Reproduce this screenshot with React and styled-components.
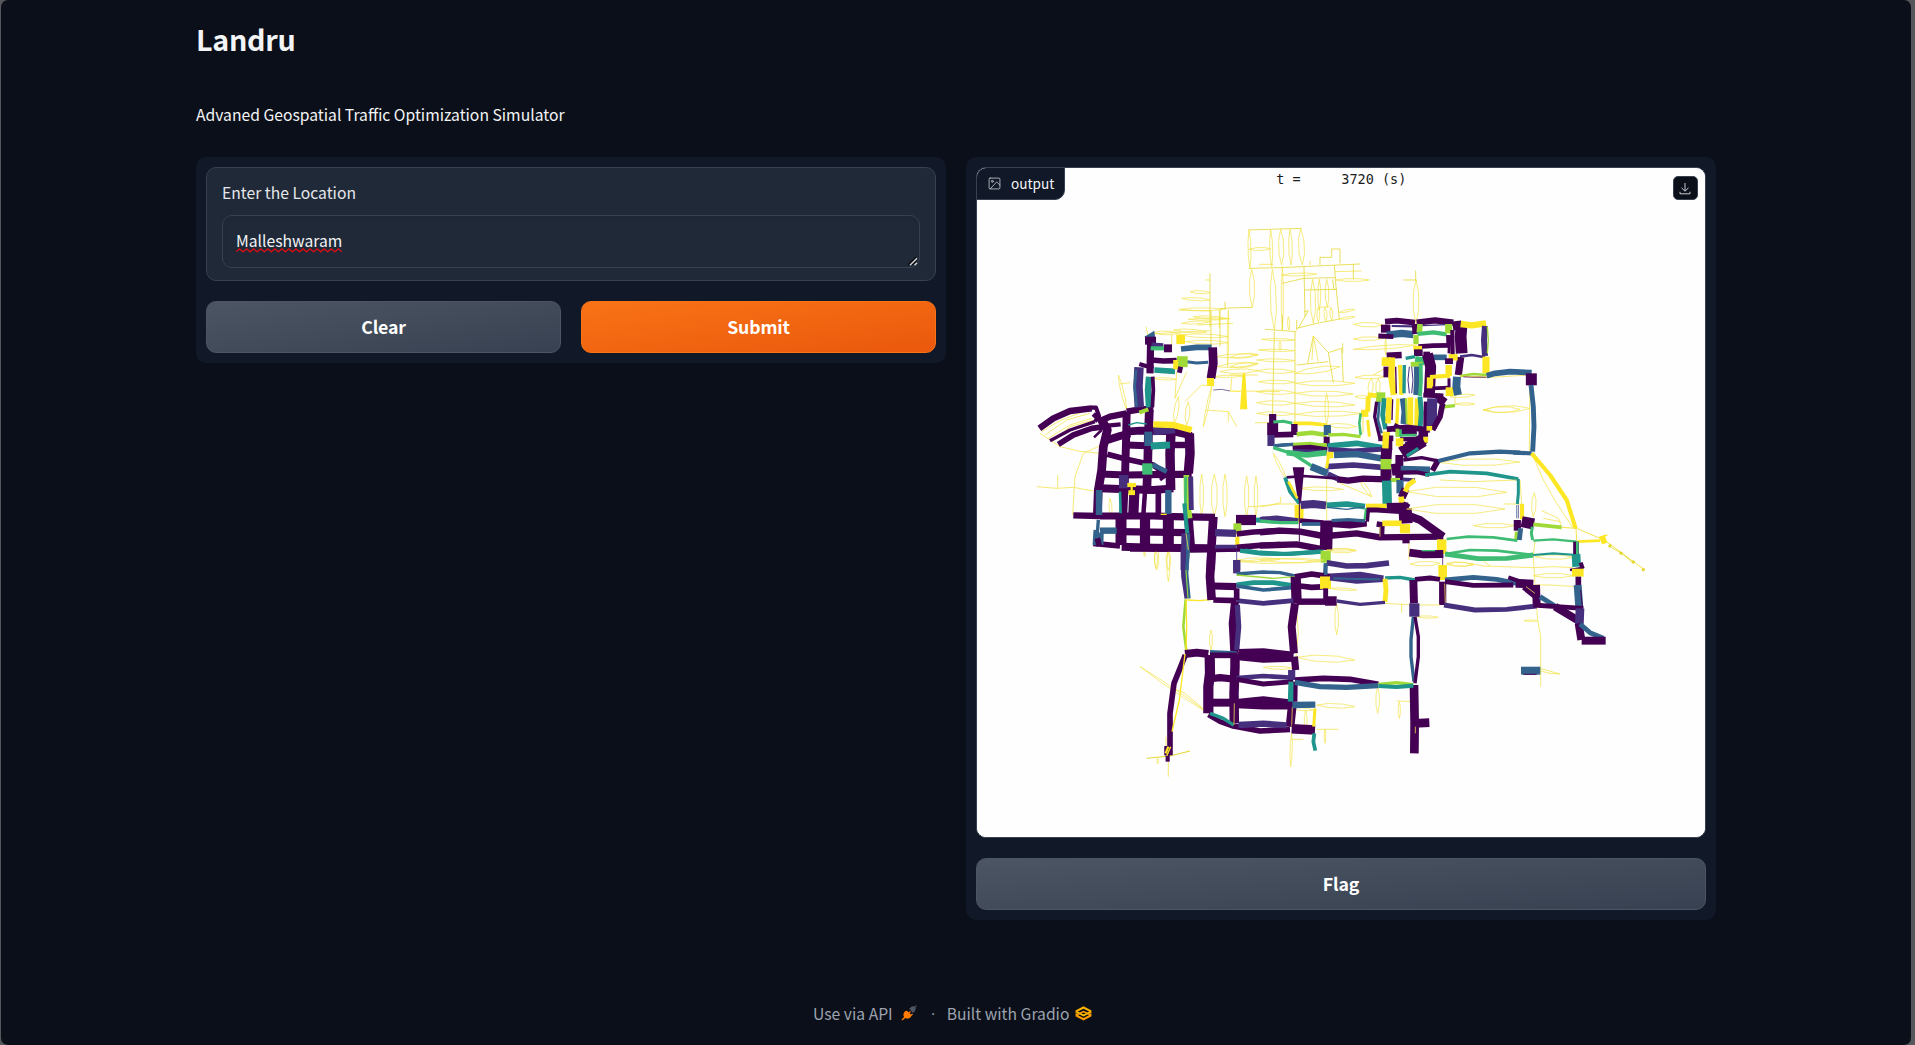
import React from 'react';
import styled, { createGlobalStyle } from 'styled-components';

const GlobalStyle = createGlobalStyle`
  * { box-sizing: border-box; }
  body {
    margin: 0;
    background: #55575b;
    font-family: "Noto Sans CJK SC", "Noto Sans CJK JP", "Open Sans", sans-serif;
    color: #f3f4f6;
  }
`;

const Frame = styled.div`
  height: 1045px;
  margin: 0 4px 0 1px;
  background: #0b0f19;
  border-radius: 7px;
  overflow: hidden;
`;

const Page = styled.main`
  width: 1520px;
  height: 1045px;
  margin-left: 195px;
  display: flex;
  flex-direction: column;
`;

const Title = styled.h1`
  margin: 16px 0 0;
  height: 46px;
  line-height: 46px;
  font-size: 28.7px;
  letter-spacing: -0.3px;
  font-weight: 700;
`;

const Description = styled.p`
  margin: 40px 0 0;
  height: 26px;
  line-height: 26px;
  font-size: 15.7px;
  white-space: nowrap;
`;

const Columns = styled.div`
  margin-top: 29px;
  display: flex;
  align-items: flex-start;
  gap: 20px;
`;

const Panel = styled.section`
  width: 750px;
  padding: 10px;
  border-radius: 10px;
  background: #111827;
  display: flex;
  flex-direction: column;
  gap: 20px;
`;

const Field = styled.label`
  height: 114px;
  padding: 14px 15px 12px;
  border: 1px solid #374151;
  border-radius: 10px;
  background: #1f2937;
  display: flex;
  flex-direction: column;
`;

const FieldName = styled.span`
  height: 22px;
  line-height: 22px;
  margin-bottom: 11px;
  font-size: 15.7px;
  color: #e5e7eb;
`;

const TextBox = styled.div`
  position: relative;
  height: 53px;
  padding: 1px 13px 0;
  border: 1px solid #374151;
  border-radius: 10px;
  box-shadow: inset 0 2px 4px rgba(0, 0, 0, 0.06);
  line-height: 48px;
  font-size: 15.7px;
`;

const Misspelt = styled.span`
  position: relative;
  display: inline-block;
`;

const Squiggle = styled.svg`
  position: absolute;
  left: 0;
  top: 31px;
`;

const ResizeGrip = styled.svg`
  position: absolute;
  right: 1px;
  bottom: 1px;
`;

const ButtonRow = styled.div`
  display: flex;
  gap: 20px;
`;

const Button = styled.button`
  flex: 1;
  height: 52px;
  padding: 0;
  border: 1px solid ${(p) => (p.$primary ? '#f97316' : '#4b5563')};
  border-radius: 10px;
  background: ${(p) =>
    p.$primary
      ? 'linear-gradient(to bottom right, #f97316, #ea580c)'
      : 'linear-gradient(to bottom right, #4b5563, #374151)'};
  color: #fff;
  font-family: inherit;
  font-size: 17.7px;
  letter-spacing: -0.15px;
  font-weight: 700;
  line-height: 46px;
  padding-bottom: 2px;
`;

const ImageBlock = styled.div`
  position: relative;
  height: 671px;
  border: 1px solid #374151;
  border-radius: 10px;
  background: #fff;
  overflow: hidden;
`;

const Badge = styled.div`
  position: absolute;
  top: -1px;
  left: -1px;
  width: 89px;
  height: 33px;
  padding: 0 0 1px 11px;
  display: flex;
  align-items: center;
  gap: 10px;
  border: 1px solid #374151;
  border-radius: 10px 0 10px 0;
  background: #111827;
  color: #f3f4f6;
  font-size: 13.6px;
  line-height: 28px;
`;

const Download = styled.button`
  position: absolute;
  top: 8px;
  right: 7px;
  width: 25px;
  height: 24px;
  padding: 0 1px 0 0;
  display: grid;
  place-items: center;
  border: 1px solid #374151;
  border-radius: 5px;
  background: #0b0f19;
  color: #c5c9d0;
`;

const Footer = styled.footer`
  margin-top: 82px;
  height: 24px;
  display: flex;
  align-items: center;
  padding-left: 617px;
  color: #9ca3af;
  font-size: 15.7px;
  line-height: 24px;
  white-space: nowrap;
  svg { display: block; position: relative; top: -1px; }
`;

const Dot = styled.span`
  width: 30px;
  padding-left: 3px;
  text-align: center;
  font-family: "Liberation Sans", sans-serif;
`;

const FooterItem = styled.span`
  display: flex;
  align-items: center;
  gap: ${(p) => p.$gap}px;
`;

const Clock = styled.text`
  font-family: "DejaVu Sans Mono", monospace;
  font-size: 13.5px;
  fill: #1c1c1c;
  white-space: pre;
`;

const COLORS = {
  P: '#440154', V: '#46307e', B: '#33638d', T: '#1f958b',
  G: '#3fbc73', L: '#a0da39', Y: '#fde725', y: '#f3e34a', D: '#e3d62a',
};

/* Each street: colour letter + width, then points. "y@n" is a pair of thin
   lanes bowed apart by n. "#" fills the outline. */
const TILES = [
  { x: 1020, y: 310, roads: `
y2 75,375 140,330 210,310
y2 85,385 150,345 215,325
y2 65,365 120,332 200,300
y2 60,370 120,410 180,424 240,430
y2 100,392 150,350 220,330
y2 50,530 110,535 160,532 230,545 380,535
y2 113,495 113,535
y2 245,405 190,430 165,500 158,615
y@5 545,492 545,620
y@8 583,492 583,620
y@6 615,492 615,620
y@6 680,498 680,620
y@5 708,498 708,620
y2 685,590 740,588 780,578
y2 400,72 480,66 570,62
y@5 400,68 475,70
y@5 480,75 625,80
y@5 495,95 625,98
D2 573,0 573,110
y2 598,0 598,55
y@2 625,0 623,170
y2 475,0 570,3
y@3 505,28 630,26
y2 530,45 640,40
y@5 585,140 715,135
y@6 590,170 715,160
y@6 600,185 715,182
y@3 580,200 670,198
y2 635,205 632,240
y2 495,275 545,225 580,228
y@3 575,230 550,350
y2 555,300 625,305 650,350
y2 625,305 625,335
y2 470,185 465,265 500,185
y@6 475,260 463,340
y@6 505,275 500,345
y@4 295,195 320,300
y2 300,222 330,218
y@4 270,565 273,620
y@3 400,205 470,208
y2 455,70 455,108
y2 378,50 385,80
y@6 410,710 410,780
y@6 445,720 445,780
y2 372,720 372,738
y@5 650,750 780,748
y2 480,60 480,80
V2.1 580,240 605,238 630,243
Y3 630,243 660,244
y2 660,243 780,245
Y# 668,190 676,190 682,298 660,298
P16 58,355 100,325 150,303 215,295
P10 213,293 228,293 237,318 225,335
P12 220,312 245,335
P8 90,392 150,360 225,335
P14 115,403 160,375 215,355 255,350
P10 245,352 270,346 302,343
P6 222,382 245,360
P16 235,335 270,320 320,310
P16 320,305 360,298 400,296
P22 245,330 262,360 250,410 245,480 235,540 232,615
P20 320,305 318,400 315,500 310,610
P22 388,300 385,380 383,470 380,550
P20 255,392 300,378 330,370
P20 320,365 360,362 460,362
P18 310,405 320,405 400,408
P14 262,433 320,448 400,465 440,495
P18 240,492 320,495 440,493 515,493
P20 238,535 300,537 400,540 460,535
P18 400,362 460,365 515,377
P24 453,365 450,430 452,540
P24 508,370 510,430 505,490
P16 460,405 510,405
P16 160,616 240,618
P18 240,618 400,618 460,620 585,622
P28 303,620 303,705
P26 375,620 375,710
P28 445,620 445,712
P22 505,620 512,710
P22 580,620 575,700 572,780
P18 300,665 500,668
P20 305,710 400,713 575,715
P14 220,700 300,708
P26 343,545 340,615
P11 375,545 370,615
P14 415,545 415,615
B16 237,540 237,615
B16 445,540 445,612
T6 300,545 302,610
B8 235,630 232,670
B16 240,662 290,662
B17 241,668 240,705
B12 228,660 225,705
P14 232,685 238,708
B20 385,365 385,408
T18 392,408 450,405
P14 383,408 383,500
V20 400,364 465,358
Y16 400,343 460,345 515,360
B12 398,464 440,485
P8 420,510 445,492
V24 311,495 311,535
Y10 322,525 348,525
Y12 325,548 345,548
Y5 335,525 335,550
Y4 422,613 440,613
T4 325,345 350,338 380,342
L10 358,308 385,298
G26 382,460 382,494
V24 357,172 354,230 358,292
B6 348,180 344,230 350,290
T16 387,200 384,240 387,292
P9 398,200 400,240 397,292
B# 373,80 403,62 406,90
P20 375,92 408,92
P18 392,85 390,190
P10 358,162 400,175
P14 395,150 430,153 470,152
T14 403,180 465,184
V10 395,104 430,106
G10 392,115 432,115
P20 432,115 456,115
B14 483,117 530,112 575,112
P22 578,112 580,160 573,205
B7 500,155 530,159 565,157
Y20 561,216 582,216
Y24 469,88 495,88
L28 471,155 503,155
Y12 467,150 467,178
P12 482,170 478,188
L14 499,495 500,560 509,625
G6 497,500 496,600
V12 512,500 514,600
T10 493,580 502,670
V14 493,670 490,780
B9 505,670 500,780
y2 498,670 508,740
P26 648,630 708,630
T12 708,630 780,634
V10 725,626 780,626
L20 652,640 652,672
Y10 652,680 652,706
V18 585,668 648,670
P14 650,672 700,666 780,662
V18 585,715 650,715
P14 650,712 720,706 780,704
T10 660,722 720,730 780,732
V18 650,750 650,780` },
  { x: 1230, y: 220, roads: `
D2 55,30 215,25
y@4 57,30 60,145
y@4 122,30 125,140
y@7 152,28 155,135
y@5 180,28 183,135
y@8 212,26 217,135
y@4 57,88 122,86
D2 57,145 150,143 390,132
y2 88,133 130,133
y@7 65,148 67,262
D2 -30,266 0,264 67,262
y@8 127,148 133,330
y@3 157,140 157,330
D2 222,140 225,290
y@7 248,178 250,310
y@4 268,178 268,270
y@5 290,178 292,262
y2 240,122 240,135
D2 270,135 270,112 305,112 305,87 330,87 330,130
D2 313,135 318,200 328,297
D2 308,178 312,210
y@4 155,165 260,162
D2 157,190 222,175 315,173
D2 225,210 320,208
D2 370,132 370,178
y2 315,155 395,153
y@4 318,180 418,180
y@4 265,262 265,305
y@4 285,262 288,303
y@4 303,262 305,300
y2 265,262 300,260
y@3 328,277 375,268
D2 200,325 260,310 330,297
y@3 330,297 375,290
D2 105,328 200,335
D2 133,335 127,605
D2 195,335 195,610
y@3 95,358 195,360
y@3 85,390 195,392
y@3 150,365 150,390
y@4 80,420 195,422
y@6 80,452 195,455
y@5 85,485 195,487
y@6 80,515 195,518
y@6 80,548 195,550
y@5 80,580 195,582
y2 75,608 120,608
y@8 195,460 330,440
y@7 195,490 375,490
y@7 195,520 370,522
y@7 195,550 375,555
y@7 195,583 395,580
y@6 290,615 380,620
D2 200,435 295,425
D2 233,430 250,348 295,398 335,385 340,485
y2 250,348 246,420
y2 250,348 265,425
D2 295,398 310,488
D2 338,370 338,400
y@5 290,520 290,615
D2 157,285 157,330
y@3 175,290 177,330
D2 200,300 200,330
D2 222,275 235,272 205,325
y@6 370,313 460,315
y@5 370,357 460,355
y@5 370,388 560,375
D2 520,180 560,180
D2 557,152 557,180
y@8 558,180 558,310
y@2 467,355 467,405
y@6 0,412 83,403
y@6 0,440 83,432
y2 0,465 83,465
y@5 375,472 465,470
y2 430,465 465,445
y@7 424,475 420,525
y@6 445,475 443,525
y@4 375,530 420,532
y@4 660,530 735,525
y@3 675,552 735,552
y2 760,570 780,572
y2 675,530 675,555
P14 465,305 500,302 555,308
P16 560,308 615,301 670,308
P24 467,314 467,338
B18 470,345 515,340 550,344
P12 445,348 490,350
V5 485,318 550,319
P16 555,312 557,342
L14 570,312 568,338
V4 578,317 650,314
G10 562,342 610,337 650,343
L18 656,312 656,340
P22 680,303 683,330
P12 565,380 610,377 660,376
P18 659,345 660,375
P10 667,330 668,405
P7 658,375 657,400
P30 695,310 692,350 695,400
Y16 692,312 725,316 768,310
V15 765,318 762,360 765,408
L4 772,320 775,360 772,400
V6 690,410 725,405 765,412
P18 692,412 685,465
Y18 768,410 768,460
L6 690,468 730,462 770,465
P4 700,470 770,472
L13 558,345 558,372
Y12 550,385 576,385
P22 565,388 565,408
P16 470,407 515,405
T8 527,415 555,410
P8 580,400 600,400
G20 555,420 584,424
L12 542,433 577,433
B14 603,412 650,412
Y16 656,412 683,412
P20 657,415 657,432
P28 592,402 602,440 598,525
Y22 468,412 468,438
P16 470,440 470,472
Y16 486,412 484,470 492,525
P4 497,440 499,520
Y10 510,435 514,525
T8 523,435 522,520
V3 538,440 534,480 538,520
V3 545,440 549,480 545,520
B14 560,440 561,480 558,525
G9 572,430 573,480 570,528
Y10 600,471 660,467
Y16 656,435 656,468
Y16 600,472 600,505
P9 607,505 655,503
P7 657,475 657,505
Y20 659,502 659,528
B20 681,470 679,500 684,525
P12 580,525 640,528
P22 620,530 645,548
L8 635,561 675,557
L24 452,517 452,546
Y12 413,525 440,527
Y12 415,530 413,575
Y18 393,580 415,580
G6 392,580 388,610 392,645
Y7 413,600 418,650
y3 399,590 399,640
P8 440,545 434,590 450,655
B6 448,545 444,600 455,640
T12 463,535 458,585 467,628
Y14 478,532 474,610
P4 488,538 486,600
Y8 504,535 500,620
B14 518,535 523,575 520,612
L5 528,535 531,612
Y14 541,532 541,615
Y12 562,535 560,620
T12 570,530 574,580 570,625
P14 590,545 588,630
V26 607,535 606,560 605,625
P14 638,550 630,590 608,630
P14 470,628 530,622 600,630
P20 490,620 520,635 560,632
G14 507,628 507,650
G6 510,646 560,645
P24 580,622 580,660 530,680
P10 510,658 590,655
Y18 470,635 467,655
Y14 512,655 512,680
P14 445,655 490,655
Y12 587,650 587,668
Y14 598,618 598,632
P20 475,660 475,690
P18 128,582 128,610
P28 128,608 128,645
P14 115,645 190,643
V18 123,645 123,678
G7 130,606 160,604 187,610
Y9 190,610 240,610 290,615
P16 193,612 193,645
L11 200,643 245,638 290,645
B18 292,615 292,645
P15 290,650 290,680
L8 295,645 340,643 392,650
L9 190,674 240,671 290,678
B7 135,677 190,673` },
  { x: 1260, y: 400, roads: `
y@5 120,265 250,268
y@5 300,240 335,290
y2 240,250 335,290
y@4 40,160 78,235
y2 62,290 62,310
y2 0,318 60,312 120,312
y2 200,215 200,360
y@6 200,452 290,452
y@8 670,30 780,28
y@5 0,480 180,485
y@6 450,492 540,490
y@6 560,490 640,495
y2 447,425 447,480
y@9 535,187 780,186
B8 40,138 70,135 100,133
L9 100,135 200,135
P14 98,146 150,143 202,150
V8 100,152 200,155
G14 80,158 140,165 200,158
G8 40,143 100,162 158,200
B18 153,200 203,220
V14 203,222 235,237
P16 232,238 265,242 310,236 380,238
T14 203,138 290,130 378,145
V12 205,148 280,153 375,147
B16 222,165 290,162 380,178
V14 200,200 280,195 375,203
P28 380,145 378,178
P28 378,205 378,245
Y16 200,165 220,165
Y7 205,170 200,205
L28 378,177 378,208
P30 395,210 430,205
P20 418,165 418,240
P34 425,160 490,120
L9 412,86 412,110
T8 440,168 475,145
Y16 378,100 376,145
Y18 418,115 418,138
P8 430,180 485,173 535,183
P14 535,180 517,212
B18 422,208 510,210
P10 420,218 470,217 508,224
T9 495,225 570,215 680,220 775,237
B10 535,183 630,160 720,155 780,158
L10 392,240 420,240
V9 428,238 465,240
B18 420,240 420,280
P24 420,275 442,285
Y12 465,240 445,255 435,275
Y14 423,290 427,320
T24 380,242 382,320
P18 380,320 445,318
Y15 318,320 380,320
G8 320,325 315,360
P12 320,330 350,330 420,335
P8 325,330 322,365
P34 435,325 438,370
P20 440,345 480,360 550,410
P10 430,310 448,320
P# 98,202 133,202 123,310 115,310
P6 80,232 130,228 230,235
T9 75,232 90,275 118,310
Y6 85,245 112,295
Y14 112,315 113,368
Y8 126,315 125,365
V20 122,315 160,312 198,316
T14 200,316 260,312 315,320
B4 200,322 260,328 315,320
P3 118,300 118,425
V12 0,358 50,354 115,362
G8 0,363 60,368 115,368
P12 120,362 190,368 320,370
P12 210,374 270,378 320,372
B9 125,372 190,372
B8 215,362 265,359 315,363
P32 200,365 198,450
P16 0,397 60,392 120,395 190,408
P16 200,408 290,400 360,412 550,410
P16 0,437 110,433 190,448
P14 350,372 370,375
P12 367,370 365,415
y2 360,380 360,410
Y14 367,370 425,370
Y26 435,372 435,400
P18 438,402 438,430
T10 0,458 70,462 190,455
L26 197,452 197,488
B10 197,490 195,530
V14 200,488 260,498 320,497 387,489
Y24 545,418 545,462
P20 448,458 490,463 550,462
G4 485,452 525,452
P2.1 548,462 548,495` },
  { x: 1440, y: 300, roads: `
y2 60,228 150,232 270,225
y2 270,230 268,455
y@9 130,330 270,325
y2 280,470 310,540 350,610 400,685
y2 240,540 245,610
y2 0,540 100,545 230,540
y@14 -100,575 200,577
y@13 -100,627 195,627
y2 190,612 250,612
y@6 100,677 225,677
y@6 283,578 280,650
y2 305,632 355,655 365,680
y2 310,655 362,665
y2 90,790 130,798 280,803
y@5 20,793 100,793
y2 115,770 150,798
y@6 285,770 400,772
y2 280,803 340,800 400,803
y@6 280,827 400,827
y2 240,855 330,855 410,860
y2 285,720 280,770 285,850
y2 290,920 293,960 302,1010 302,1160
y@2 252,962 292,962
y2 300,1105 360,1122
y2 300,1112 330,1120 360,1122
B14 140,227 165,220 210,215 275,218
P28 274,220 274,256
B12 273,255 280,320 282,380 278,455
B10 220,458 275,460
Y10 275,460 330,525 380,600 407,685
T7 235,537 235,580 232,612
Y10 246,612 246,658
B2 230,615 230,655
V2 235,615 235,655
P18 232,660 232,692
P28 245,665 282,672
L12 232,695 230,720
B12 242,685 238,720
G7 277,680 274,700 278,720
L9 280,673 365,682
y3 365,682 410,685 480,715
y3 408,685 410,720
Y20 482,722 498,716
Y4 478,712 502,705
Y6 412,725 480,722
y3 500,725 540,755 580,785 612,808
D2 505,738 545,760 580,790
D7 507,735 513,740
D7 540,757 546,762
D7 577,784 583,788
D7 606,808 614,810
G6 20,717 85,710 160,712 232,722
G5 280,722 340,718 410,725
G6 15,762 90,750 170,752 280,765
G12 15,762 115,776 200,775 280,765
T5 280,765 340,760 410,765
P14 408,725 408,765
G6 412,725 412,765
T22 408,762 410,800
P6 390,810 430,803
P10 422,788 428,806
Y20 396,818 431,818
P14 415,830 415,857
B20 413,855 418,925
P3 422,870 427,920
Y22 8,795 8,840
P18 8,845 8,915
y2 14,850 16,910
B12 15,840 100,832 170,838 230,850
P12 15,845 100,856 220,855
P10 205,832 245,846
P22 227,850 280,852
P24 255,857 290,885
P20 288,855 290,918
y2 258,860 285,880
B12 300,890 345,918
V12 12,915 105,930 200,928 290,918
P12 280,915 350,920 430,925
P20 345,920 420,965
V22 420,925 418,972
P20 416,970 424,1020
B12 420,972 450,998 490,1015
P20 425,1022 497,1022
B20 243,1112 301,1112
P3 250,1123 290,1123` },
  { x: 1130, y: 550, roads: `
y@4 78,0 78,55
y@4 115,0 115,95
y2 45,0 45,20
y@4 243,240 243,300
y@5 620,160 620,255
y@3 600,115 680,120
y@7 330,35 580,30
y@3 590,0 675,0
y2 765,160 850,165 930,165
y2 815,160 815,188
y@3 860,200 925,202
y@9 500,322 675,330
y@4 400,352 490,355
y@6 560,465 675,470
y@4 485,475 550,480
y@4 527,480 527,550
y2 560,538 625,538
y@2 585,538 585,580
y@3 485,550 482,650
y2 485,568 520,568
y@5 743,410 743,490
y2 800,453 860,455
y@3 808,455 808,505
y@3 30,350 235,490
y2 120,410 165,430 230,485
D3 50,625 120,618 180,603
y@2 83,625 83,642
y2 115,635 115,680
y2 108,560 108,590
y2 500,180 505,250 498,320
V14 160,0 162,80 172,145
B8 175,0 170,70 177,145
L3 168,60 174,145
L6 167,148 160,230 170,310
Y4 168,148 170,230 168,310
Y4 172,150 210,152 248,148
P22 245,0 240,80 245,150
P8 0,0 120,0
P8 180,3 330,0
T10 345,2 400,10 480,12 570,5
V18 320,30 320,70
V2 320,0 320,30
B8 320,72 400,66 450,68 495,78
L4 320,75 430,85 495,80
P18 250,108 320,110
T12 320,105 370,98 430,98 495,108
B9 320,108 400,120 495,112
P26 497,80 500,160
P14 495,80 545,72 600,80
P14 510,108 545,112 590,110
Y32 570,98 603,98
P12 587,115 587,150
P16 500,155 590,155
P24 585,153 620,153
V12 320,152 400,160 490,152
P14 250,150 320,152
P14 320,115 320,150
B8 587,40 587,75
V16 600,80 690,75 760,86
V10 600,85 680,95 760,90
B5 610,85 680,87 750,88
T8 765,84 810,82 855,90
P12 855,88 900,84 930,88
Y12 765,86 768,120 765,155
V8 620,153 690,163 765,157
P20 850,90 852,160
V26 853,160 853,200
B8 850,200 843,270 843,320 852,395
P8 855,200 865,260 865,320 855,400
P22 852,405 854,520 853,610
P22 855,520 898,518
y2 856,530 856,550
P20 315,155 308,220 313,310
V13 322,165 326,230 320,300
P20 495,160 485,230 492,310
P20 165,312 200,308 235,312
B10 240,306 320,310
P14 240,316 320,316
P22 325,310 400,308 490,318
P22 325,318 400,325 490,322
P26 239,315 240,370 235,410 235,490
P24 315,310 315,350 312,430 313,520
P18 235,387 270,383 310,387
V11 320,384 400,378 490,383
P12 320,388 400,402 490,395
P20 240,458 310,458
P22 320,460 400,452 490,462
P18 320,464 400,468 490,468
P18 493,320 497,360
V18 485,360 485,390
T16 485,395 483,455
P10 497,395 496,455
P22 487,465 480,530
y2 487,470 485,530
B16 487,465 556,464
P12 235,495 270,515 312,530
T8 240,490 280,505 312,526
P14 310,528 390,543 480,538
V16 325,525 400,521 470,526
P24 485,536 555,540
Y7 555,475 551,530
T9 553,550 550,575 556,602
P14 495,390 580,385 660,388 745,403
B13 495,397 570,410 650,412 745,407
L8 745,403 800,398 850,404
T10 745,408 800,411 850,407
y2 313,460 312,525
P14 166,315 132,400 120,490 120,590
Y4 165,312 148,450 126,545
P22 104,602 128,602
P20 115,588 115,616
P10 113,615 113,635
Y5 115,590 107,610
Y4 122,590 110,618` },
  { x: 1110, y: 250, roads: `
D2 300,70 300,230
y2 285,90 300,90
y@4 240,125 300,128
y@4 215,145 300,150
y@4 210,178 340,178
y@4 250,200 350,205
D2 345,155 345,180
y@4 215,220 300,215
y@5 190,240 290,246
D2 330,180 330,290` },
];

function roadPath(line) {
  const [spec, ...rest] = line.trim().split(' ');
  const pts = rest.map((p) => p.split(',').map(Number));
  const color = COLORS[spec[0]];
  if (spec[1] === '@') {
    const bow = Number(spec.slice(2));
    const [[x1, y1], [x2, y2]] = pts;
    const len = Math.hypot(x2 - x1, y2 - y1) || 1;
    const nx = (-(y2 - y1) / len) * bow;
    const ny = ((x2 - x1) / len) * bow;
    const at = (t, s) => `${x1 + (x2 - x1) * t + nx * s},${y1 + (y2 - y1) * t + ny * s}`;
    const side = (s) => `M${x1},${y1}L${at(0.3, s)}L${at(0.7, s)}L${x2},${y2}`;
    return { d: side(1) + side(-1), color, width: 2.8, opacity: 0.75 };
  }
  const d = 'M' + pts.map((p) => p.join(',')).join('L');
  if (spec[1] === '#') return { d: d + 'Z', color, fill: true };
  const width = Number(spec.slice(1));
  if (width <= 2) return { d, color, width: 2.8, opacity: 0.82 };
  return { d, color, width: width < 5 ? width : width * 1.14 + 1, opacity: 1 };
}

function TrafficMap() {
  return (
    <svg width="728" height="669" viewBox="977 168 728 669" display="block">
      <rect x="977" y="168" width="728" height="669" fill="#fefefe" />
      {TILES.map((tile) => (
        <g key={`${tile.x}-${tile.y}`} transform={`translate(${tile.x} ${tile.y}) scale(0.33333)`} fill="none" strokeLinejoin="round">
          {tile.roads.trim().split('\n').map((line, i) => {
            const r = roadPath(line);
            return r.fill
              ? <path key={i} d={r.d} fill={r.color} />
              : <path key={i} d={r.d} stroke={r.color} strokeWidth={r.width} opacity={r.opacity} />;
          })}
        </g>
      ))}
      <Clock x="1276.3" y="183.5" xmlSpace="preserve">{'t =     3720 (s)'}</Clock>
    </svg>
  );
}

function ImageIcon() {
  return (
    <svg width="13" height="13" viewBox="0 0 24 24" fill="none" stroke="#c9cdd4" strokeWidth="1.5" strokeLinecap="round" strokeLinejoin="round">
      <rect x="2" y="2" width="20" height="20" rx="2" />
      <circle cx="8" cy="8" r="1.8" />
      <path d="M22 15l-6-6L4 22" />
    </svg>
  );
}

function DownloadIcon() {
  return (
    <svg width="12" height="13" viewBox="0 0 12 13" fill="none" stroke="currentColor" strokeWidth="1">
      <path d="M6 1v8M2.5 5.8L6 9.2l3.500-3.400M1 9.800v2h10v-2" />
    </svg>
  );
}

function PlugIcon() {
  return (
    <svg width="16" height="16" viewBox="0 0 16 16">
      <path d="M8.200 3.600L10.800 1.600Q12.600 1.200 13.600 1.500L15 .3l.7.7-1.100 1.300Q15 4.600 14 6l-2 1.900z" fill="#4b5563" />
      <path d="M3.200 7.200Q4.600 5.600 6 5.800L7.800 7.500 9 5.900l.9.800L8.700 8.300l1.200 1.200 1.300-1 .8.900-1.500 1.400Q10 12.400 8.200 13.200 6.200 14 4.400 13L1.200 15.600.4 14.800 3 11.900Q1.800 9.600 3.200 7.200z" fill="#ff7c00" />
    </svg>
  );
}

function GradioIcon() {
  return (
    <svg width="17" height="15" viewBox="0 0 17 15" fill="none" strokeWidth="2.100">
      <path d="M.9 9.300L8.500 13.300l7.600-4" stroke="#ff9a00" />
      <path d="M.9 5.400L8.500 9.500l7.600-4.100" stroke="#ffc400" strokeWidth="1.700" />
      <path d="M.9 9.300L8.500 5.600l7.600 3.700" stroke="#ffa200" strokeWidth="1.600" />
      <path d="M.9 5.400L8.500 1.500l7.600 3.900" stroke="#ffb100" />
      <path d="M1.200 5v4.600M15.800 5v4.600" stroke="#ff9d00" strokeWidth="1" />
    </svg>
  );
}

const WAVE = 'M0 3.800' + Array.from({ length: 15 }, () => 'l3.530-3l3.530 3').join('');

export default function App() {
  return (
    <>
      <GlobalStyle />
      <Frame>
        <Page>
          <Title>Landru</Title>
          <Description>Advaned Geospatial Traffic Optimization Simulator</Description>
          <Columns>
            <Panel>
              <Field>
                <FieldName>Enter the Location</FieldName>
                <TextBox>
                  <Misspelt>
                    Malleshwaram
                    <Squiggle width="106" height="5" viewBox="0 0 106 5">
                      <path d={WAVE} fill="none" stroke="#d90f14" strokeWidth="1.300" />
                    </Squiggle>
                  </Misspelt>
                  <ResizeGrip width="10" height="10" viewBox="0 0 10 10">
                    <path d="M0 9L8 1M4 9L8 5" stroke="#0a0c10" strokeWidth="1.500" />
                    <path d="M2 9.300L9 2.300M6.500 9.300L9 6.800" stroke="#d4d6da" strokeWidth="1.300" />
                  </ResizeGrip>
                </TextBox>
              </Field>
              <ButtonRow>
                <Button>Clear</Button>
                <Button $primary>Submit</Button>
              </ButtonRow>
            </Panel>
            <Panel>
              <ImageBlock>
                <TrafficMap />
                <Badge><ImageIcon />output</Badge>
                <Download aria-label="Download"><DownloadIcon /></Download>
              </ImageBlock>
              <ButtonRow>
                <Button>Flag</Button>
              </ButtonRow>
            </Panel>
          </Columns>
          <Footer>
            <FooterItem $gap={8}>Use via API <PlugIcon /></FooterItem>
            <Dot>·</Dot>
            <FooterItem $gap={6}>Built with Gradio <GradioIcon /></FooterItem>
          </Footer>
        </Page>
      </Frame>
    </>
  );
}
